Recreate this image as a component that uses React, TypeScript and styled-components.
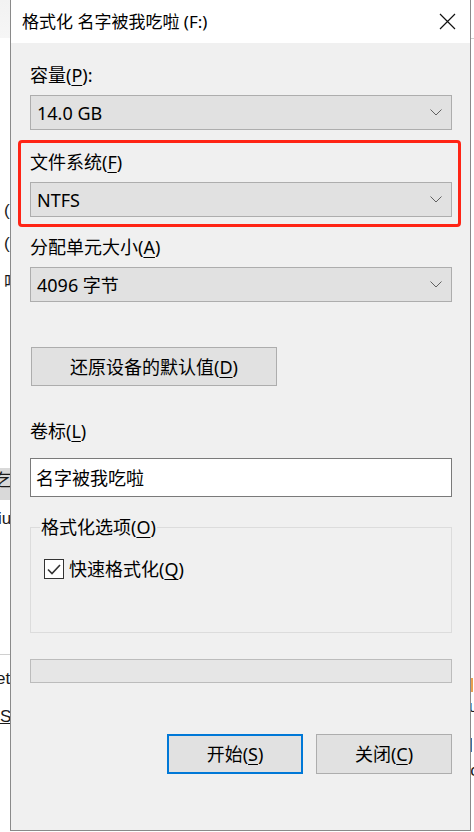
import React from "react"
import styled, { createGlobalStyle } from "styled-components"

const GlobalStyle = createGlobalStyle`
  html, body {
    margin: 0;
    padding: 0;
    background: #ffffff;
  }
  body {
    font-family: "Noto Sans", "Noto Sans CJK SC", sans-serif;
    color: #000;
  }
`

const FONT = `"Noto Sans", "Noto Sans CJK SC", sans-serif`

interface SelectProps {
  value: string
}

const Chevron = () => (
  <svg width="12" height="7" viewBox="0 0 12 7">
    <polyline points="0.5,0.5 6,6 11.5,0.5" fill="none" stroke="#606060" strokeWidth="1" />
  </svg>
)

const CloseIcon = () => (
  <svg width="17" height="17" viewBox="0 0 17 17">
    <path d="M1 1 L16 16 M16 1 L1 16" stroke="#111" strokeWidth="1.2" fill="none" />
  </svg>
)

const CheckIcon = () => (
  <svg width="14" height="11" viewBox="0 0 14 11">
    <polyline points="1,5.5 5,9.5 13,1" fill="none" stroke="#333" strokeWidth="1.6" />
  </svg>
)

function Select({ value }: SelectProps) {
  return (
    <SelectBox>
      <span>{value}</span>
      <Chevron />
    </SelectBox>
  )
}

export default class App extends React.Component {
  render() {
    return (
      <>
        <GlobalStyle />
        <Desktop>
          <BackWindow side="left">
            <TopShade />
            <Peek top={200}>(</Peek>
            <Peek top={233}>(</Peek>
            <Peek top={272}>吃</Peek>
            <GrayBand top={468} />
            <Peek top={470} shift={-4}>乞吃</Peek>
            <Peek top={508} shift={-2}>iu</Peek>
            <Divider top={654} />
            <Peek top={668} shift={-4}>et</Peek>
            <Peek top={706} shift={0}><u>S</u></Peek>
          </BackWindow>
          <Dialog>
            <TitleBar>
              <Title>格式化 名字被我吃啦 (F:)</Title>
              <CloseButton>
                <CloseIcon />
              </CloseButton>
            </TitleBar>
            <Body>
              <Label>容量(<Key>P</Key>):</Label>
              <Select value="14.0 GB" />

              <Highlight>
                <Label>文件系统(<Key>F</Key>)</Label>
                <Select value="NTFS" />
              </Highlight>

              <Label gap={8}>分配单元大小(<Key>A</Key>)</Label>
              <Select value="4096 字节" />

              <ResetButton>还原设备的默认值(<Key>D</Key>)</ResetButton>

              <Label gap={33}>卷标(<Key>L</Key>)</Label>
              <TextBox>名字被我吃啦</TextBox>

              <Group>
                <Legend>格式化选项(<Key>O</Key>)</Legend>
                <CheckRow>
                  <CheckBox>
                    <CheckIcon />
                  </CheckBox>
                  <span>快速格式化(<Key>Q</Key>)</span>
                </CheckRow>
              </Group>

              <Progress />

              <Actions>
                <ActionButton primary>开始(<Key>S</Key>)</ActionButton>
                <ActionButton>关闭(<Key>C</Key>)</ActionButton>
              </Actions>
            </Body>
          </Dialog>
          <BackWindow side="right">
            <Divider top={38} />
            <Peek top={676} shift={-1}><Orange /></Peek>
            <Peek top={696} shift={-6}>ju</Peek>
            <Peek top={736} shift={-2}><Blue /></Peek>
            <Peek top={760} shift={-4}>'c</Peek>
          </BackWindow>
        </Desktop>
      </>
    )
  }
}

const Desktop = styled.div`
  position: relative;
  width: 474px;
  height: 832px;
  overflow: hidden;
  display: flex;
  background: #ffffff;
`

const BackWindow = styled.div<{ side: "left" | "right" }>`
  position: relative;
  flex: 0 0 ${p => (p.side === "left" ? 10 : 3)}px;
  height: 832px;
  overflow: hidden;
  background: #ffffff;
`

const TopShade = styled.div`
  height: 38px;
  background: linear-gradient(#f2f2f2, #f6f6f6);
`

const Peek = styled.span<{ top: number; shift?: number }>`
  position: absolute;
  top: ${p => p.top}px;
  left: ${p => p.shift ?? 4}px;
  font-family: "Liberation Sans", "Noto Sans CJK SC", sans-serif;
  font-size: 17px;
  line-height: 22px;
  white-space: nowrap;
  color: #1a1a1a;
`

const GrayBand = styled.div<{ top: number }>`
  position: absolute;
  top: ${p => p.top}px;
  left: 0;
  right: 0;
  height: 32px;
  background: #d9d9d9;
`

const Divider = styled.div<{ top: number }>`
  position: absolute;
  top: ${p => p.top}px;
  left: 0;
  right: 0;
  height: 1px;
  background: #d0d0d0;
`

const Orange = styled.i`
  display: inline-block;
  width: 3px;
  height: 14px;
  background: #e8a050;
`

const Blue = styled.i`
  display: inline-block;
  width: 3px;
  height: 14px;
  background: #3a6ea8;
`

const Dialog = styled.div`
  position: relative;
  z-index: 1;
  flex: 0 0 461px;
  height: 831px;
  box-sizing: border-box;
  border: 1px solid #8a8a8a;
  border-top: none;
  display: flex;
  flex-direction: column;
  background: #f0f0f0;
`

const TitleBar = styled.div`
  height: 43px;
  flex: 0 0 43px;
  background: #ffffff;
  display: flex;
  align-items: center;
  justify-content: space-between;
  padding: 0 13px 0 11px;
`

const Title = styled.div`
  font-family: ${FONT};
  font-size: 17px;
  line-height: 22px;
  color: #000;
`

const CloseButton = styled.div`
  width: 20px;
  height: 20px;
  display: flex;
  align-items: center;
  justify-content: center;
`

const Body = styled.div`
  flex: 1;
  display: flex;
  flex-direction: column;
  padding: 20px 18px 0 19px;
  font-family: ${FONT};
  font-size: 18px;
`

const Key = styled.u`
  text-decoration-thickness: 1px;
  text-underline-offset: 3px;
`

const Label = styled.div<{ gap?: number }>`
  height: 24px;
  line-height: 24px;
  margin: ${p => p.gap ?? 0}px 0 8px;
  color: #000;
`

const SelectBox = styled.div`
  height: 35px;
  box-sizing: border-box;
  border: 1px solid #adadad;
  background: #e1e1e1;
  display: flex;
  align-items: center;
  justify-content: space-between;
  padding: 0 9px 0 6px;
  line-height: 24px;
`

const Highlight = styled.div`
  margin: 10px -9px 0 -12px;
  padding: 7px 6px 7px 9px;
  border: 3px solid #ff2415;
  border-radius: 4px;
`

const ResetButton = styled.div`
  width: 246px;
  height: 39px;
  box-sizing: border-box;
  margin: 45px 0 0 1px;
  border: 1px solid #adadad;
  background: #e1e1e1;
  display: flex;
  align-items: center;
  justify-content: center;
  line-height: 24px;
`

const TextBox = styled.div`
  height: 39px;
  box-sizing: border-box;
  margin-top: 7px;
  border: 1px solid #7a7a7a;
  background: #ffffff;
  display: flex;
  align-items: center;
  padding: 0 5px;
  line-height: 24px;
`

const Group = styled.fieldset`
  margin: 18px 0 0;
  padding: 8px 8px 0;
  height: 118px;
  box-sizing: border-box;
  border: 1px solid #dcdcdc;
  min-width: 0;
`

const Legend = styled.legend`
  padding: 0 1px;
  margin-left: 1px;
  line-height: 24px;
`

const CheckRow = styled.div`
  display: flex;
  align-items: center;
  gap: 5px;
  margin: 10px 0 0 5px;
  line-height: 24px;
`

const CheckBox = styled.div`
  width: 20px;
  height: 20px;
  box-sizing: border-box;
  border: 1px solid #333333;
  background: #ffffff;
  display: flex;
  align-items: center;
  justify-content: center;
`

const Progress = styled.div`
  height: 24px;
  box-sizing: border-box;
  margin-top: 26px;
  border: 1px solid #bcbcbc;
  background: #e6e6e6;
`

const Actions = styled.div`
  display: flex;
  justify-content: flex-end;
  gap: 13px;
  margin-top: 51px;
`

const ActionButton = styled.div<{ primary?: boolean }>`
  width: 136px;
  height: 40px;
  box-sizing: border-box;
  border: ${p => (p.primary ? "2px solid #0078d7" : "1px solid #adadad")};
  background: #e1e1e1;
  display: flex;
  align-items: center;
  justify-content: center;
  line-height: 24px;
`
